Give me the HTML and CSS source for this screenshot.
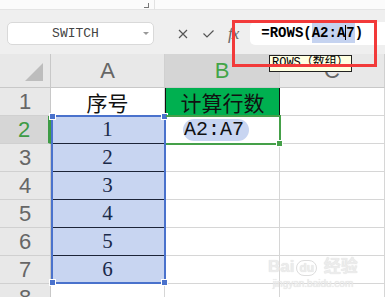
FILE: index.html
```html
<!doctype html>
<html lang="zh-CN">
  <head>
    <meta charset="UTF-8" />
    <title>ROWS</title>
    <link rel="stylesheet" href="styles.css">
  </head>
  <body>
    <div class="app">
      <div class="topstrip">
        <span class="corner-mark"></span>
        <span class="strip-divider"></span>
      </div>

      <div class="toolbar">
        <div class="namebox">
          <span class="name">SWITCH</span>
          <span class="drop"></span>
        </div>
        <div class="tools">
          <svg class="tool-x" width="10" height="10" viewBox="0 0 10 10">
            <path d="M1 1 L9 9 M9 1 L1 9" stroke="#555" stroke-width="1.2" fill="none" />
          </svg>
          <svg class="tool-ok" width="11" height="8" viewBox="0 0 11 8">
            <path d="M0.5 3.5 L4 7 L10.5 0.5" stroke="#555" stroke-width="1.2" fill="none" />
          </svg>
          <span class="fx">fx</span>
        </div>
        <div class="formula">=ROWS(<span class="ref">A2:A<i class="cursor"></i>7</span>)</div>
      </div>

      <div class="sheet">
        <div class="cell corner">
          <svg width="18" height="18" viewBox="0 0 18 18"><polygon points="0,18 18,18 18,0" fill="#bdbdbd" /></svg>
        </div>
        <div class="cell colhead">A</div>
        <div class="cell colhead active">B</div>
        <div class="cell colhead">C</div>

        <div class="cell rowhead">1</div>
        <div class="cell text">序号</div>
        <div class="cell text green">计算行数</div>
        <div class="cell"></div>

        <div class="cell rowhead active">2</div>
        <div class="cell num sel">1</div>
        <div class="cell current"><span class="pill">A2:A7</span></div>
        <div class="cell"></div>

        <div class="cell rowhead">3</div>
        <div class="cell num sel">2</div>
        <div class="cell"></div>
        <div class="cell"></div>

        <div class="cell rowhead">4</div>
        <div class="cell num sel">3</div>
        <div class="cell"></div>
        <div class="cell"></div>

        <div class="cell rowhead">5</div>
        <div class="cell num sel">4</div>
        <div class="cell"></div>
        <div class="cell"></div>

        <div class="cell rowhead">6</div>
        <div class="cell num sel">5</div>
        <div class="cell"></div>
        <div class="cell"></div>

        <div class="cell rowhead">7</div>
        <div class="cell num sel last">6</div>
        <div class="cell"></div>
        <div class="cell"></div>

        <div class="cell rowhead">8</div>
        <div class="cell"></div>
        <div class="cell"></div>
        <div class="cell"></div>

        <div class="range">
          <span class="handle tl"></span>
          <span class="handle tr"></span>
          <span class="handle bl"></span>
          <span class="handle br"></span>
        </div>
        <div class="active-cell"><span class="fill-handle"></span></div>

        <div class="watermark">
          <span class="wm-main">Bai<span class="wm-du">du</span> 经验</span>
          <span class="wm-url">jingyan.baidu.com</span>
        </div>
      </div>

      <div class="redbox"></div>
      <div class="tip">ROWS（数组）</div>
    </div>
  </body>
</html>
```

FILE: styles.css
```css
body {
  margin: 0;
  padding: 0;
  background: #fff;
}
.app {
  position: relative;
  width: 385px;
  height: 297px;
  overflow: hidden;
  font-family: "Liberation Sans", Arial, sans-serif;
}

/* top strip */
.topstrip {
  height: 10px;
  background: #fbfbfb;
  border-bottom: 1px solid #e4e4e4;
  box-sizing: border-box;
  display: flex;
  align-items: flex-start;
}
.corner-mark {
  width: 4px;
  height: 4px;
  margin: 3px 0 0 144px;
  border-right: 1px solid #777;
  border-bottom: 1px solid #777;
}
.strip-divider {
  width: 1px;
  height: 10px;
  margin-left: 5px;
  background: #e2e2e2;
}

/* toolbar */
.toolbar {
  height: 44px;
  background: #efefef;
  display: flex;
  align-items: flex-start;
  padding-top: 12px;
  box-sizing: border-box;
}
.namebox {
  width: 147px;
  height: 23px;
  margin-left: 7px;
  background: #fff;
  border: 1px solid #d9d9d9;
  border-radius: 5px;
  box-sizing: border-box;
  display: flex;
  align-items: center;
  position: relative;
}
.name {
  flex: 1;
  text-align: center;
  font-family: "Liberation Mono", monospace;
  font-size: 13px;
  color: #444;
}
.drop {
  width: 0;
  height: 0;
  margin-right: 4px;
  border-left: 3px solid transparent;
  border-right: 3px solid transparent;
  border-top: 3px solid #999;
}
.tools {
  display: flex;
  align-items: center;
  height: 23px;
  margin-left: 24px;
}
.tool-x {
  margin-right: 15px;
}
.tool-ok {
  margin-right: 14px;
}
.fx {
  font-family: "Liberation Serif", serif;
  font-style: italic;
  font-size: 17px;
  color: #666;
  letter-spacing: -1px;
}
.formula {
  flex: 1;
  height: 23px;
  margin-left: 12px;
  background: #fff;
  border-radius: 5px 0 0 5px;
  padding-left: 11px;
  font-family: "Liberation Mono", monospace;
  font-weight: bold;
  font-size: 14px;
  line-height: 23px;
  color: #000;
}
.ref {
  background: #c5d3f0;
  padding: 2px 0;
  position: relative;
}
.cursor {
  display: inline-block;
  width: 1px;
  height: 15px;
  background: #000;
  vertical-align: -3px;
}

/* sheet */
.sheet {
  position: relative;
  display: grid;
  grid-template-columns: 51px 114px 115px 105px;
  grid-template-rows: 34px repeat(8, 28px);
}
.cell {
  box-sizing: border-box;
  border-right: 1px solid #d6d6d6;
  border-bottom: 1px solid #d6d6d6;
  display: flex;
  align-items: center;
  justify-content: center;
}
.corner {
  background: #e8e8e8;
  border-color: #c8c8c8;
  align-items: flex-end;
  justify-content: flex-end;
  padding: 0 7px 6px 0;
}
.colhead {
  background: #e8e8e8;
  border-right-color: #d0d0d0;
  border-bottom-color: #c8c8c8;
  font-size: 22px;
  color: #666;
}
.colhead.active {
  background: #d5d5d5;
  color: #43a548;
}
.rowhead {
  background: #e8e8e8;
  border-right-color: #c8c8c8;
  border-bottom-color: #d0d0d0;
  font-size: 22px;
  color: #666;
}
.rowhead.active {
  background: #d6d6d6;
  color: #3d9b45;
  border-right: 3px solid #3d9b45;
}
.text {
  font-family: "Noto Sans CJK SC", sans-serif;
  font-size: 21px;
  color: #111;
}
.green {
  background: #00b050;
  border: 1px solid #111;
  border-top: none;
}
.num {
  font-family: "Liberation Serif", serif;
  font-size: 21px;
  color: #1a2a4a;
}
.sel {
  background: #c8d5f1;
  border-bottom: 1px solid #1c2438;
}
.sel.last {
  border-bottom-color: #d6d6d6;
}
.current {
  justify-content: flex-start;
  padding-left: 18px;
}
.pill {
  background: #c8d5f1;
  border-radius: 11px;
  padding: 0 5px 0 1px;
  font-family: "Liberation Mono", monospace;
  font-size: 20px;
  line-height: 22px;
  color: #111;
}

/* overlays */
.range {
  position: absolute;
  left: 51px;
  top: 61px;
  width: 115px;
  height: 169px;
  border: 2px solid #4a72cc;
  box-sizing: border-box;
}
.handle {
  position: absolute;
  width: 5px;
  height: 5px;
  background: #4a72cc;
  border: 1px solid #fff;
}
.handle.tl { left: -4px; top: -4px; }
.handle.tr { right: -4px; top: -4px; }
.handle.bl { left: -4px; bottom: -4px; }
.handle.br { right: -4px; bottom: -4px; }
.active-cell {
  position: absolute;
  left: 166px;
  top: 61px;
  width: 115px;
  height: 30px;
  border: 2px solid #45a049;
  border-left: none;
  box-sizing: border-box;
}
.fill-handle {
  position: absolute;
  right: -4px;
  bottom: -4px;
  width: 5px;
  height: 5px;
  background: #45a049;
  border: 1px solid #fff;
}
.watermark {
  position: absolute;
  left: 268px;
  top: 198px;
  display: flex;
  flex-direction: column;
  align-items: center;
  color: #ececec;
  text-shadow: 0 0 1px #d8d8d8;
}
.wm-main {
  font-size: 17px;
  font-weight: bold;
  font-family: "Liberation Sans", "Noto Sans CJK SC", sans-serif;
}
.wm-du {
  border: 1px solid #ddd;
  border-radius: 8px;
  padding: 0 2px;
  margin: 0 2px;
  font-size: 12px;
}
.wm-url {
  font-size: 10px;
  margin-top: 1px;
}
.redbox {
  position: absolute;
  left: 232px;
  top: 20px;
  width: 145px;
  height: 47px;
  border: 3px solid #f23a3a;
  box-sizing: border-box;
  z-index: 2;
}
.tip {
  position: absolute;
  left: 269px;
  top: 55px;
  height: 17px;
  padding: 0 2px;
  background: #ffffe1;
  border: 1px solid #222;
  box-sizing: border-box;
  font-family: "Liberation Mono", "Noto Sans CJK SC", monospace;
  font-size: 12px;
  line-height: 15px;
  color: #000;
  z-index: 1;
}
```
